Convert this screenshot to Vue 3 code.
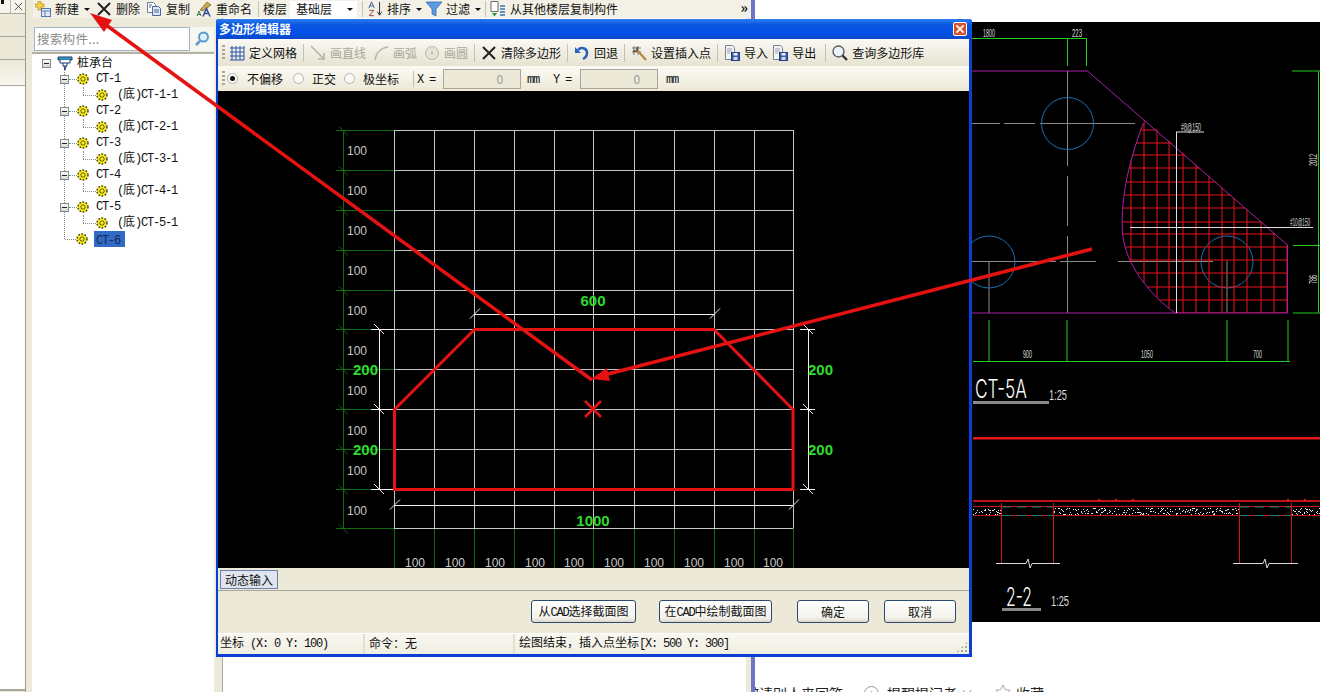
<template>
  <div class="page">
    <svg class="defs" width="0" height="0">
      <symbol id="gear" viewBox="0 0 12 12">
        <circle cx="6" cy="6" r="5.2" fill="#f4e81c" />
        <circle cx="6" cy="6" r="5" fill="none" stroke="#3a3a10" stroke-width="1.4" stroke-dasharray="1.6 1.6" />
        <path d="M3 6h6M6 3v6M4 4l4 4M8 4l-4 4" stroke="#5a5410" stroke-width="1" />
        <circle cx="6" cy="6" r="1.4" fill="#f4e81c" />
      </symbol>
      <symbol id="docs" viewBox="0 0 16 16">
        <path d="M1.5 1.5h6l2 2v8h-8z" fill="#fff" stroke="#6a7a9a" />
        <path d="M6.5 5.5h6l2 2v7h-8z" fill="#dfe8f6" stroke="#4a66a0" />
        <path d="M8 9h5M8 11h5M3 4h3M3 6h2" stroke="#4a66a0" />
      </symbol>
      <symbol id="floppy" viewBox="0 0 16 16">
        <path d="M1.5 .5h7l2 2v12h-9z" fill="#f4f4f4" stroke="#7a8296" />
        <path d="M3 4h5M3 6h5M3 8h3" stroke="#9aa2b6" />
        <rect x="7.5" y="7.5" width="8" height="8" fill="#3a5aa8" stroke="#26407e" />
        <rect x="9.5" y="8" width="4" height="2.5" fill="#e8eefc" />
        <rect x="9.5" y="12" width="4" height="3" fill="#cfd8ee" />
      </symbol>
      <symbol id="cross" viewBox="0 0 16 16">
        <path d="M2 2l12 12M14 2L2 14" stroke="#222" stroke-width="2" />
      </symbol>
    </svg>

    <div class="left">
      <div class="dock">
        <div class="dock-head">
          <span class="pin"></span>
          <span class="dock-x">
            <svg viewBox="0 0 10 10" width="9" height="9"><path d="M1 1l8 8M9 1l-8 8" stroke="#444" /></svg>
          </span>
        </div>
        <div class="dock-row"></div>
        <div class="dock-row"></div>
        <div class="dock-row last"></div>
        <div class="dock-list"></div>
      </div>

      <div class="rest">
        <div class="toolbar">
          <span class="tool first">
            <svg class="ico" viewBox="0 0 16 16">
              <path d="M3 0h3v3h3v3H6v3H3V6H0V3h3z" fill="#f3d24a" stroke="#b09020" stroke-width=".7" />
              <rect x="6.5" y="7.5" width="9" height="8" fill="#dfe9f8" stroke="#5a78b0" />
              <path d="M6.5 10h9M10 10v5.500" stroke="#5a78b0" />
            </svg>
            <T s="新建" />
            <i class="caret"></i>
          </span>
          <span class="tool"><svg class="ico"><use href="#cross" /></svg><T s="删除" /></span>
          <span class="tool"><svg class="ico"><use href="#docs" /></svg><T s="复制" /></span>
          <span class="tool rename">
            <svg class="ico" viewBox="0 0 16 16">
              <path d="M4 9L11 1l4 3-8 6z" fill="#c8a84a" stroke="#7a6420" stroke-width=".7" />
              <path d="M1 15l2-5 2 5M1.800 13.500h2.400" stroke="#3a7a50" fill="none" />
              <path d="M7 15.500l3.500-8 3.500 8M8.500 12.500h4" stroke="#2a4aa0" stroke-width="1.500" fill="none" />
            </svg>
            <T s="重命名" />
          </span>
          <i class="sep"></i>
          <span class="floor"><T s="楼层" /></span>
          <span class="select"><T s="基础层" /><i class="caret"></i></span>
          <i class="sep"></i>
          <span class="tool sort">
            <svg class="ico wide" viewBox="0 0 18 18">
              <path d="M1 8l3-7 3 7M2 5.500h4" stroke="#3050a0" fill="none" />
              <path d="M1.500 10.500h5l-5 6h5" stroke="#a03030" fill="none" />
              <path d="M13 1v14M10.500 12l2.500 4 2.500-4" stroke="#222" fill="none" />
            </svg>
            <T s="排序" />
            <i class="caret"></i>
          </span>
          <span class="tool filter">
            <svg class="ico" viewBox="0 0 16 16">
              <path d="M0 1h16L10 8v7l-4-2V8z" fill="#5b9be0" stroke="#2a5fa8" stroke-width=".7" />
            </svg>
            <T s="过滤" />
            <i class="caret"></i>
          </span>
          <i class="sep"></i>
          <span class="tool">
            <svg class="ico" viewBox="0 0 16 16">
              <path d="M1 .5h7v10H1z" fill="#fff" stroke="#667" />
              <path d="M2 12h5l-2.500 3.500z" fill="#2a9a3a" />
              <path d="M10 5h5M10 8h5M10 11h5M10 14h5" stroke="#3a70b8" stroke-width="1.500" />
            </svg>
            <T s="从其他楼层复制构件" />
          </span>
          <span class="more">»</span>
        </div>

        <div class="below">
          <div class="side">
            <div class="search">
              <div class="search-box">搜索构件...</div>
              <div class="search-btn">
                <svg viewBox="0 0 16 16" width="16" height="16">
                  <circle cx="9.500" cy="6" r="4.500" fill="#dff0fa" stroke="#5a9ccc" stroke-width="2" />
                  <path d="M6 10l-4 4" stroke="#5a9ccc" stroke-width="2.500" />
                </svg>
              </div>
            </div>
            <div class="tree">
              <div class="row root">
                <i class="exp"></i>
                <svg class="root-ico" viewBox="0 0 16 14">
                  <path d="M1 1h14v3H1z" fill="#3aa0c8" stroke="#123a70" />
                  <path d="M3 4v3h10V4M6 7v3h4V7M7 10l1 4 1-4" fill="#fff" stroke="#123a70" />
                </svg>
                <T s="桩承台" />
              </div>
              <template v-for="n in 5" :key="n">
                <div class="row group">
                  <i class="exp"></i>
                  <i class="dash"></i>
                  <svg class="gear"><use href="#gear" /></svg>
                  <T :s="'CT-' + n" />
                </div>
                <div class="row child">
                  <i class="dash"></i>
                  <svg class="gear"><use href="#gear" /></svg>
                  <T :s="'(底)CT-' + n + '-1'" />
                </div>
              </template>
              <div class="row group leaf">
                <i class="dash"></i>
                <svg class="gear"><use href="#gear" /></svg>
                <span class="picked"><T s="CT-6" /></span>
              </div>
            </div>
          </div>
          <div class="splitter"></div>
          <div class="blank"></div>
        </div>
      </div>
      <div class="blue-bar"></div>
    </div>

    <div class="right">
      <svg class="cad" viewBox="755 22 565 600" width="565" height="600">
        <rect x="755" y="22" width="565" height="600" fill="#000" />
        <g class="green">
          <path d="M972 38.500H1087M1067.500 38V66M1086.500 38V66" />
          <path d="M1292 71H1320M1293 245.500H1320M1293 313H1320M1318.500 71V313" />
          <path d="M973 361.500H1290M989 320V361M1067 320V361M1227 320V361M1288 320V361" />
        </g>
        <g class="center">
          <path d="M972 123.500H1000M1004 123.500H1035M1040 123.500H1135M1067.500 71V166M1067.500 176V226M1067.500 236V313" />
          <path d="M972 261.500H1056M1060 261.500H1096M1118 261.500H1213M989 261V313M1227 261V313" />
        </g>
        <g class="holes">
          <circle cx="1067.500" cy="123.500" r="26" />
          <circle cx="989" cy="262" r="26" />
          <circle cx="1227" cy="262" r="26" />
        </g>
        <clipPath id="hatch">
          <path d="M1143.500 123C1127 165 1120 205 1122.700 235C1126 265 1150 295 1175 313H1287.500V245L1143.500 118z" />
        </clipPath>
        <g clip-path="url(#hatch)" class="hatch">
          <path v-for="y in hatchY" :key="'h' + y" :d="`M1120 ${y}H1288`" />
          <path v-for="x in hatchX" :key="'v' + x" :d="`M${x} 120V314`" />
        </g>
        <path class="outline" d="M972 71H1087.500L1287.500 245V313H972" />
        <path class="outline" d="M1143.500 123C1127 165 1120 205 1122.700 235C1126 265 1150 295 1175 313" />
        <path class="bars" d="M1176 132H1204M1176.500 132V313M1130 227.500H1313" />
        <g class="cad-small">
          <text x="983" y="37" textLength="12" lengthAdjust="spacingAndGlyphs">1800</text>
          <text x="1072" y="37" textLength="10" lengthAdjust="spacingAndGlyphs">223</text>
          <text x="1181" y="131" textLength="20" lengthAdjust="spacingAndGlyphs">#8@150</text>
          <text x="1290" y="226" textLength="20" lengthAdjust="spacingAndGlyphs">#10@150</text>
          <text x="1023" y="358" textLength="9" lengthAdjust="spacingAndGlyphs">900</text>
          <text x="1141" y="358" textLength="12" lengthAdjust="spacingAndGlyphs">1050</text>
          <text x="1253" y="358" textLength="9" lengthAdjust="spacingAndGlyphs">700</text>
          <text x="1317" y="166" transform="rotate(-90 1317 166)" textLength="12" lengthAdjust="spacingAndGlyphs">2012</text>
          <text x="1317" y="284" transform="rotate(-90 1317 284)" textLength="9" lengthAdjust="spacingAndGlyphs">786</text>
        </g>
        <text class="cad-title" x="975" y="398" textLength="52" lengthAdjust="spacingAndGlyphs">CT-5A</text>
        <rect x="973" y="401" width="76" height="3" fill="#888" />
        <text class="cad-scale" x="1049" y="400" textLength="18" lengthAdjust="spacingAndGlyphs">1:25</text>

        <rect x="973" y="437" width="347" height="2.500" fill="#e01818" />
        <rect x="973" y="500" width="347" height="2" fill="#c01414" />
        <circle v-for="x in [1099, 1116, 1133, 1288, 1305]" :key="x" :cx="x" cy="500" r="1.200" fill="#e01818" />
        <path class="slab" d="M973 506.500H1320M973 515.500H1320" />
        <rect v-for="(s, i) in speckle" :key="i" :x="s.x" :y="s.y" width="1" height="1" fill="#e4e4e4" />
        <path class="pile-top" d="M1002 507H1053M1002 515.500H1053M1240 507H1291M1240 515.500H1291" />
        <path class="pile" d="M1001.500 503V563M1053.500 503V563M1239.500 503V563M1291.500 503V563" />
        <path class="breaks" d="M996 563.500H1026L1028 559L1030 568L1032 563.500H1060M1233 563.500H1263L1265 559L1267 568L1269 563.500H1298" />
        <text class="cad-title" x="1006" y="606" textLength="26" lengthAdjust="spacingAndGlyphs">2-2</text>
        <rect x="1002" y="608" width="39" height="3" fill="#888" />
        <text class="cad-scale" x="1051" y="606" textLength="18" lengthAdjust="spacingAndGlyphs">1:25</text>
      </svg>
      <div class="ask">
        <span class="invite">邀请别人来回答</span>
        <span class="info">i</span>
        <span class="remind">提醒提问者</span>
        <span class="close-x">×</span>
        <svg class="star" viewBox="0 0 16 16" width="16" height="16">
          <path d="M8 1l2.200 4.600 5 .7-3.600 3.500.9 5L8 12.400 3.500 14.800l.9-5L.8 6.300l5-.7z" fill="none" stroke="#aaa" />
        </svg>
        <span class="fav">收藏</span>
      </div>
    </div>

    <div class="dialog">
      <div class="title">
        <span>多边形编辑器</span>
        <span class="win-x">
          <svg viewBox="0 0 14 14" width="10" height="10"><path d="M2 2l10 10M12 2L2 12" stroke="#fff" stroke-width="2.500" /></svg>
        </span>
      </div>
      <div class="bar1">
        <i class="grip"></i>
        <span class="tool">
          <svg class="ico" viewBox="0 0 16 16">
            <path d="M3 1v14M7 1v14M11 1v14M15 1v14M1 3h14M1 7h14M1 11h14M1 15h14" stroke="#2a52a8" fill="none" />
          </svg>
          <T s="定义网格" />
        </span>
        <i class="sep"></i>
        <span class="tool off">
          <svg class="ico" viewBox="0 0 16 16"><path d="M1 1l13 13M14 8v6H8" stroke="#b8b4a4" stroke-width="1.500" fill="none" /></svg>
          <T s="画直线" />
        </span>
        <span class="tool off">
          <svg class="ico" viewBox="0 0 16 16"><path d="M2 15C3 8 8 3 15 2" stroke="#b8b4a4" stroke-width="1.500" fill="none" /></svg>
          <T s="画弧" />
        </span>
        <span class="tool off">
          <svg class="ico" viewBox="0 0 16 16"><circle cx="8" cy="8" r="6.500" fill="#e6e3d6" stroke="#b8b4a4" /><circle cx="8" cy="8" r="1.200" fill="#b8b4a4" /></svg>
          <T s="画圆" />
        </span>
        <i class="sep"></i>
        <span class="tool"><svg class="ico"><use href="#cross" /></svg><T s="清除多边形" /></span>
        <i class="sep"></i>
        <span class="tool">
          <svg class="ico" viewBox="0 0 16 16">
            <path d="M4 5c3-3.500 9-2 9 3 0 3-2 5-4 6" stroke="#2a62c0" stroke-width="2.500" fill="none" />
            <path d="M1 2v6h6z" fill="#2a62c0" />
          </svg>
          <T s="回退" />
        </span>
        <i class="sep"></i>
        <span class="tool">
          <svg class="ico" viewBox="0 0 16 16">
            <path d="M3 1v9M7 1v9M1 3h9M1 7h9" stroke="#777" fill="none" />
            <path d="M6 5l9 10" stroke="#b08a3a" stroke-width="2.200" />
            <path d="M6 2v4H2" stroke="#222" fill="none" />
          </svg>
          <T s="设置插入点" />
        </span>
        <i class="sep"></i>
        <span class="tool in"><svg class="ico"><use href="#floppy" /></svg><T s="导入" /></span>
        <span class="tool out"><svg class="ico"><use href="#floppy" /></svg><T s="导出" /></span>
        <i class="sep"></i>
        <span class="tool">
          <svg class="ico" viewBox="0 0 16 16">
            <circle cx="6.500" cy="6.500" r="5.500" fill="#eaf3fb" stroke="#555" stroke-width="1.300" />
            <path d="M10.500 10.500L15 15" stroke="#333" stroke-width="2.400" />
          </svg>
          <T s="查询多边形库" />
        </span>
      </div>
      <div class="bar2">
        <i class="grip"></i>
        <span class="radio on"></span><span class="radio-text first-text"><T s="不偏移" /></span>
        <span class="radio"></span><span class="radio-text"><T s="正交" /></span>
        <span class="radio"></span><span class="radio-text"><T s="极坐标" /></span>
        <span class="bar2-end">
          <i class="sep"></i>
          <span class="coord"><T s="X =" /></span>
          <span class="num">0<i class="spin"></i></span>
          <span class="unit"><T s="mm" /></span>
          <span class="coord y"><T s="Y =" /></span>
          <span class="num">0<i class="spin"></i></span>
          <span class="unit"><T s="mm" /></span>
        </span>
      </div>

      <svg class="canvas" viewBox="218 91 751 477" width="751" height="477">
        <rect x="218" y="91" width="751" height="477" fill="#000" />
        <g class="grid-ext">
          <path d="M343.500 130V528" />
          <path v-for="y in gridY" :key="'ly' + y" :d="`M336 ${y}.5H394M339 ${y - 4}.5l9 9`" />
          <path v-for="x in gridX" :key="'bx' + x" :d="`M${x}.5 528V568`" />
        </g>
        <g class="grid">
          <path v-for="x in gridX" :key="'gx' + x" :d="`M${x}.5 130V528`" />
          <path v-for="y in gridY" :key="'gy' + y" :d="`M394 ${y}.5H793`" />
        </g>
        <g class="dims">
          <path d="M474 314.500H714M394 505.500H793M379.500 329V489M808.500 329V489" />
          <path d="M470 318.500l10-10M710 318.500l10-10M390 509.500l10-10M789 509.500l10-10" />
          <path d="M371 329.500H394M371 409.500H394M371 489.500H394M800 329.500H815M800 409.500H815M800 489.500H815" />
          <path d="M374 324l10 10M374 404l10 10M374 484l10 10M803 324l10 10M803 404l10 10M803 484l10 10" />
        </g>
        <g class="labels">
          <text v-for="y in rowLabels" :key="'rl' + y" x="347" :y="y + 5">100</text>
          <text v-for="x in colLabels" :key="'cl' + x" :x="x" y="567" text-anchor="middle">100</text>
        </g>
        <path class="poly" d="M394.500 409.500L474.500 329.500H714L793 409.500V489.500H394.500z" />
        <path class="mark" d="M585 401l16 16M601 401l-16 16" />
        <g class="size">
          <text x="353" y="375">200</text>
          <text x="353" y="455">200</text>
          <text x="808" y="375">200</text>
          <text x="808" y="455">200</text>
          <text x="593" y="306" text-anchor="middle">600</text>
          <text x="593" y="526" text-anchor="middle">1000</text>
        </g>
      </svg>

      <div class="tabs"><span class="tab"><T s="动态输入" /></span></div>
      <div class="actions">
        <button class="btn w105"><T s="从CAD选择截面图" /></button>
        <button class="btn w113"><T s="在CAD中绘制截面图" /></button>
        <button class="btn w72"><T s="确定" /></button>
        <button class="btn w72"><T s="取消" /></button>
      </div>
      <div class="status">
        <span class="cell c1"><T s="坐标 (X: 0 Y: 100)" /></span>
        <span class="cell c2"><T s="命令：无" /></span>
        <span class="cell c3"><T s="绘图结束，插入点坐标[X: 500 Y: 300]" /></span>
        <i class="resize"></i>
      </div>
    </div>

    <svg class="arrows" viewBox="0 0 1320 692" width="1320" height="692">
      <path d="M592 380L102 22" />
      <path d="M1092 249L604 375" />
      <polygon points="90,13 112,20 104,32" />
      <polygon points="591,379 610,381 607,368" />
    </svg>
  </div>
</template>

<script setup>
import { h } from "vue";

// latin is half the width of cjk, same as the dialog font
const T = (props) =>
  h(
    "span",
    { class: "t" },
    props.s
      .split(/([\x00-\x7f]+)/)
      .filter(Boolean)
      .map((p) => h("span", { class: /^[\x00-\x7f]/.test(p) ? "lat" : "cjk" }, p))
  );
T.props = ["s"];

const gridX = [394, 434, 474, 514, 554, 593, 634, 674, 714, 754, 793];
const gridY = [130, 170, 210, 250, 290, 329, 369, 409, 449, 489, 528];
const rowLabels = [150, 190, 230, 270, 310, 350, 390, 430, 470, 510];
const colLabels = [415, 455, 495, 535, 574, 614, 654, 694, 734, 773];

const hatchY = [130, 143, 155, 168, 182, 195, 208, 222, 234, 247, 260, 273, 287, 300, 313];
const hatchX = [1131, 1144, 1157, 1169, 1183, 1196, 1209, 1222, 1234, 1247, 1261, 1274, 1287];

// concrete fill in the slab section
const speckle = [];
let seed = 7;
const next = () => (seed = (seed * 16807) % 2147483647) / 2147483647;
for (const [from, to] of [[973, 1001], [1053, 1239], [1291, 1320]]) {
  for (let x = from; x < to; x += 1) {
    if (next() < 0.7) speckle.push({ x, y: 508 + Math.floor(next() * 7) });
    if (next() < 0.45) speckle.push({ x, y: 508 + Math.floor(next() * 7) });
  }
}
</script>

<style scoped>
.page {
  position: relative;
  display: flex;
  width: 1320px;
  height: 692px;
  overflow: hidden;
  background: #fff;
  font: 12px/14px "Noto Sans CJK SC", "Liberation Sans", sans-serif;
  color: #111;
}
.defs {
  position: absolute;
}
.left {
  display: flex;
  flex: none;
  width: 755px;
  background: #ece9d8;
}

.dock {
  flex: none;
  width: 26px;
  display: flex;
  flex-direction: column;
  border-right: 1px solid #9c9a8e;
  box-sizing: border-box;
}
.dock-head {
  height: 13px;
  display: flex;
  justify-content: space-between;
  overflow: hidden;
  border-bottom: 1px solid #a8a698;
  background: #f5f3ea;
}
.pin {
  width: 3px;
  height: 4px;
  margin-left: 1px;
  background: #111;
}
.dock-x {
  width: 14px;
  display: flex;
  align-items: center;
  justify-content: center;
  border-left: 1px solid #bbb;
}
.dock-row {
  height: 22px;
  border-bottom: 1px solid #a8a698;
}
.dock-row.last {
  height: 25px;
  border-bottom: 0;
  background: linear-gradient(#ece9d8, #f8f7f0);
}
.dock-list {
  flex: 1;
  background: #fff;
  border-top: 1px solid #a8a698;
  border-bottom: 2px solid #a8a698;
  margin-bottom: 1px;
}

.rest {
  flex: 1;
  display: flex;
  flex-direction: column;
  min-width: 0;
}
.toolbar {
  height: 18px;
  margin-left: 7px;
  display: flex;
  align-items: center;
  position: relative;
  background: #f3f1e6;
  white-space: nowrap;
}
.tool {
  display: flex;
  align-items: center;
  gap: 4px;
  margin-right: 6px;
}
.tool.first {
  margin-left: 2px;
}
.tool.rename {
  margin-right: 5px;
}
.tool.sort {
  margin-right: 4px;
}
.tool.filter {
  margin-right: 3px;
}
.ico {
  width: 16px;
  height: 16px;
  flex: none;
}
.ico.wide {
  width: 18px;
  margin-right: -2px;
}
.caret {
  width: 0;
  height: 0;
  margin-left: 1px;
  border: 3px solid transparent;
  border-top: 3px solid #111;
  border-bottom: 0;
}
.sep {
  flex: none;
  width: 1px;
  height: 16px;
  margin: 0 4px 0 1px;
  background: #c5c2b0;
}
.floor {
  margin-right: 3px;
}
.select {
  width: 67px;
  height: 17px;
  margin-right: 4px;
  padding-left: 6px;
  box-sizing: border-box;
  display: flex;
  align-items: center;
  justify-content: space-between;
  padding-right: 4px;
  background: #fff;
}
.more {
  position: absolute;
  right: 3px;
  top: -2px;
  font-size: 14px;
  line-height: 18px;
  font-weight: 700;
}

.below {
  flex: 1;
  display: flex;
  min-height: 0;
  padding-left: 6px;
}
.side {
  flex: none;
  width: 182px;
  display: flex;
  flex-direction: column;
}
.search {
  display: flex;
  height: 34px;
  padding: 9px 0 1px 2px;
  box-sizing: border-box;
}
.search-box {
  width: 156px;
  height: 24px;
  padding-left: 2px;
  box-sizing: border-box;
  line-height: 22px;
  font-size: 12.500px;
  letter-spacing: .3px;
  color: #8a8a8a;
  background: #fff;
  border: 1px solid #9fb3c8;
}
.search-btn {
  width: 24px;
  height: 24px;
  display: flex;
  align-items: center;
  justify-content: center;
  background: #f7f7f2;
}
.tree {
  flex: 1;
  position: relative;
  padding-top: 1px;
  background: #fff;
  border-top: 2px solid #b4b2a6;
}
.tree::before {
  content: "";
  position: absolute;
  left: 32px;
  top: 16px;
  height: 169px;
  border-left: 1px dotted #888;
}
.row {
  position: relative;
  height: 16px;
  display: flex;
  align-items: center;
  white-space: nowrap;
}
.row > .t {
  margin-top: -2px;
}
.exp {
  flex: none;
  position: relative;
  width: 9px;
  height: 9px;
  box-sizing: border-box;
  background: linear-gradient(#fff, #d8d6c8);
  border: 1px solid #7f8a9a;
}
.exp::after {
  content: "";
  position: absolute;
  left: 1px;
  top: 3px;
  width: 5px;
  height: 1px;
  background: #222;
}
.root {
  padding-left: 10px;
}
.root-ico {
  width: 16px;
  height: 14px;
  margin: 0 4px 0 6px;
}
.gear {
  flex: none;
  width: 12px;
  height: 12px;
}
.dash {
  flex: none;
  height: 0;
  border-top: 1px dotted #888;
}
.group {
  padding-left: 28px;
}
.group .dash {
  width: 8px;
}
.group .gear {
  margin-right: 7px;
}
.group.leaf {
  padding-left: 33px;
}
.group.leaf .dash {
  width: 11px;
}
.group.leaf .gear {
  margin-right: 6px;
}
.child {
  padding-left: 51px;
}
.child::before {
  content: "";
  position: absolute;
  left: 51px;
  top: 0;
  height: 8px;
  border-left: 1px dotted #888;
}
.child .dash {
  width: 13px;
}
.child .gear {
  margin-right: 9px;
}
.picked {
  padding: 0 5px 0 2px;
  height: 16px;
  line-height: 15px;
  color: #15275c;
  background: #316ac5;
}
.splitter {
  flex: none;
  width: 8px;
}
.blank {
  flex: 1;
  margin-right: 5px;
  background: #fff;
  border-left: 1px solid #aaa;
}
.blue-bar {
  flex: none;
  width: 4px;
  background: #6f74c4;
}

.right {
  flex: 1;
  padding-top: 22px;
  min-width: 0;
  overflow: hidden;
}
.cad {
  display: block;
}
.green path {
  fill: none;
  stroke: #22cc22;
}
.center path {
  fill: none;
  stroke: #8a8a8a;
}
.holes circle {
  fill: none;
  stroke: #1c6fb4;
}
.hatch path {
  fill: none;
  stroke: #e8121c;
}
.outline {
  fill: none;
  stroke: #a820a8;
}
.bars {
  fill: none;
  stroke: #e0e0e0;
}
.cad-small text {
  font: 10px "Liberation Sans", sans-serif;
  fill: #ddd;
}
.cad-title {
  font: 300 25px Inter, "Liberation Sans", sans-serif;
  fill: #fff;
}
.cad-scale {
  font: 14px "Liberation Sans", sans-serif;
  fill: #ddd;
}
.slab {
  fill: none;
  stroke: #c81414;
}
.pile {
  fill: none;
  stroke: #d01418;
}
.pile-top {
  fill: none;
  stroke: #1a7f80;
  stroke-dasharray: 9 6;
}
.breaks {
  fill: none;
  stroke: #ddd;
}
.ask {
  height: 20px;
  margin-top: 64px;
  display: flex;
  align-items: flex-start;
  font-size: 14px;
  line-height: 14px;
  white-space: nowrap;
  color: #222;
}
.invite {
  margin-left: -10px;
  width: 98px;
}
.info {
  flex: none;
  width: 13px;
  height: 13px;
  margin-left: 21px;
  border: 1px solid #999;
  border-radius: 50%;
  text-align: center;
  font-size: 11px;
  color: #999;
}
.remind {
  margin-left: 8px;
}
.close-x {
  margin-left: 3px;
  color: #aaa;
}
.star {
  flex: none;
  margin-left: 21px;
  margin-top: -2px;
}
.fav {
  margin-left: 5px;
}

.dialog {
  position: absolute;
  left: 216px;
  top: 19px;
  width: 756px;
  height: 638px;
  box-sizing: border-box;
  display: flex;
  flex-direction: column;
  background: #ece9d8;
  border: solid #0a3fd6;
  border-width: 0 3px 3px 2px;
  border-radius: 3px 3px 0 0;
}
.title {
  flex: none;
  height: 20px;
  margin: 0 -3px 0 -2px;
  padding: 0 4px 0 3px;
  display: flex;
  align-items: center;
  justify-content: space-between;
  font-weight: 700;
  color: #fff;
  border-radius: 3px 3px 0 0;
  background: linear-gradient(#2a7ef0, #0a55e0 30%, #0350e8 70%, #0a48c8);
}
.win-x {
  width: 14px;
  height: 14px;
  margin-right: 1px;
  display: flex;
  align-items: center;
  justify-content: center;
  background: #d9512c;
  border: 1px solid #fff;
  border-radius: 2px;
  box-sizing: border-box;
}
.bar1,
.bar2 {
  flex: none;
  display: flex;
  align-items: center;
  white-space: nowrap;
}
.bar1 {
  height: 27px;
  padding-left: 4px;
  background: linear-gradient(#faf9f3, #e6e3d2);
}
.bar1 .tool {
  margin-right: 7px;
}
.bar1 .tool.in {
  margin-right: 4px;
}
.bar1 .tool.out {
  margin-right: 10px;
}
.bar1 .sep {
  height: 18px;
  margin: 0 6px 0 -1px;
}
.off {
  color: #aaa79a;
}
.grip {
  flex: none;
  width: 3px;
  height: 15px;
  margin-right: 4px;
  background: repeating-linear-gradient(#a9a698 0 2px, transparent 2px 4px);
}
.bar2 {
  height: 25px;
  padding-left: 4px;
  background: linear-gradient(#fbfaf4, #ece9d8);
}
.bar2 .grip {
  margin-right: 2px;
}
.radio {
  flex: none;
  position: relative;
  width: 11px;
  height: 11px;
  margin-right: 8px;
  box-sizing: border-box;
  background: #fafaf6;
  border: 1px solid #b4b4a8;
  border-radius: 50%;
}
.radio.on {
  margin-right: 9px;
}
.radio.on::after {
  content: "";
  position: absolute;
  left: 2px;
  top: 2px;
  width: 5px;
  height: 5px;
  background: #111;
  border-radius: 50%;
}
.radio-text {
  margin-right: 8px;
}
.radio-text.first-text {
  margin-right: 10px;
}
.bar2-end {
  display: flex;
  align-items: center;
  margin-left: 6px;
}
.bar2-end .sep {
  margin: 0 3px 0 0;
}
.coord {
  width: 26px;
}
.coord.y {
  width: 27px;
}
.num {
  position: relative;
  width: 78px;
  height: 20px;
  box-sizing: border-box;
  padding-right: 17px;
  margin-right: 6px;
  text-align: right;
  line-height: 18px;
  color: #999;
  background: #ece9d8;
  border: 1px solid #a8a696;
}
.coord.y + .num {
  margin-right: 8px;
}
.spin {
  position: absolute;
  right: 4px;
  top: 2px;
  height: 14px;
  width: 0;
  border-left: 3px solid transparent;
  border-right: 3px solid transparent;
  border-top: 0;
  background: linear-gradient(#aaa 0 2px, transparent 2px 11px, #aaa 11px 13px, transparent 13px);
  background-clip: padding-box;
}
.unit {
  width: 26px;
}
.canvas {
  display: block;
  flex: none;
}
.grid-ext path {
  fill: none;
  stroke: #0d6a0d;
}
.grid path {
  fill: none;
  stroke: #c4c4c4;
}
.dims path {
  fill: none;
  stroke: #f0f0f0;
}
.labels text {
  font: 12px "Liberation Sans", sans-serif;
  fill: #c8c8c8;
}
.poly {
  fill: none;
  stroke: #e51313;
  stroke-width: 3;
}
.mark {
  fill: none;
  stroke: #e51313;
  stroke-width: 2.500;
}
.size text {
  font: 700 15px "Liberation Sans", sans-serif;
  fill: #2edc2e;
}
.tabs {
  flex: none;
  height: 23px;
  box-sizing: border-box;
  padding: 2px 0 0 2px;
  border-bottom: 1px solid #a8a698;
}
.tab {
  display: inline-block;
  width: 58px;
  height: 19px;
  box-sizing: border-box;
  text-align: center;
  line-height: 17px;
  background: #dfe4ee;
  border: 1px solid #6a80ae;
}
.actions {
  flex: none;
  height: 42px;
  padding-top: 9px;
  box-sizing: border-box;
  display: flex;
  justify-content: flex-end;
  padding-right: 13px;
}
.btn {
  height: 23px;
  padding: 0;
  font: inherit;
  color: #111;
  background: linear-gradient(#fff, #f3f2ea 80%, #dcd8c8);
  border: 1px solid #2d4a6e;
  border-radius: 3px;
}
.w105 {
  width: 105px;
  margin-right: 23px;
}
.w113 {
  width: 113px;
  margin-right: 25px;
}
.w72 {
  width: 72px;
  margin-right: 15px;
}
.w72:last-child {
  margin-right: 0;
}
.status {
  flex: none;
  position: relative;
  height: 20px;
  display: flex;
  align-items: center;
  background: linear-gradient(#f8f7f0, #f0eee2);
  border-top: 1px solid #fff;
}
.cell {
  height: 100%;
  display: flex;
  align-items: center;
  box-sizing: border-box;
  padding: 0 0 2px 2px;
  white-space: nowrap;
  border-right: 2px solid #e2dfcf;
}
.c1 {
  width: 147px;
}
.c2 {
  width: 150px;
  padding-left: 4px;
}
.c3 {
  flex: 1;
  padding-left: 4px;
  border-right: 0;
}
.resize {
  position: absolute;
  right: 1px;
  bottom: 1px;
  width: 12px;
  height: 12px;
  background: radial-gradient(circle, #a8a698 1px, transparent 1.500px) 0 0 / 4px 4px;
  clip-path: polygon(100% 0, 100% 100%, 0 100%);
}
.arrows {
  position: absolute;
  left: 0;
  top: 0;
  pointer-events: none;
}
.arrows path {
  fill: none;
  stroke: #e61212;
  stroke-width: 3.500;
}
.arrows polygon {
  fill: #e61212;
}
</style>

<style>
/* T builds these spans itself, scoped ids do not reach them */
.t {
  display: inline-block;
  white-space: pre;
}
.lat {
  font-family: "Liberation Mono", monospace;
  font-size: 12px;
  letter-spacing: -1.2px;
}
.cjk {
  font-family: "Noto Sans CJK SC", sans-serif;
}
</style>
